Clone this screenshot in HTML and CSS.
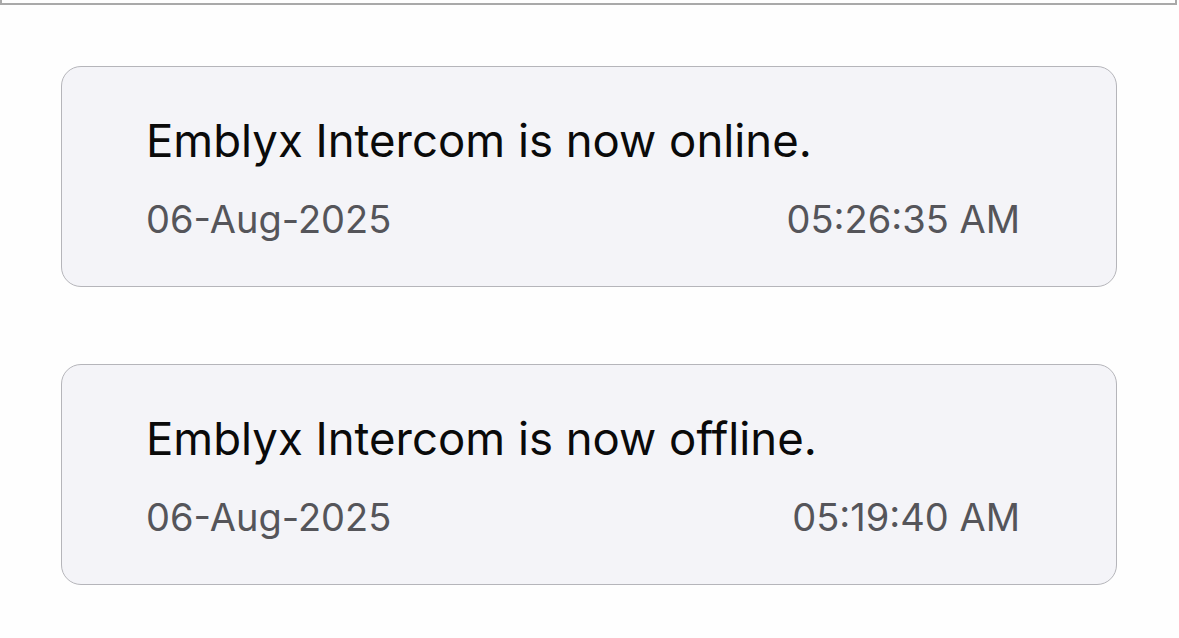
FILE: index.html
```html
<!DOCTYPE html>
<html lang="en">
<head>
<meta charset="utf-8">
<title>Notifications</title>
<link rel="stylesheet" href="styles.css">
</head>
<body>
<div class="topbar"></div>
<main class="list">
  <div class="card">
    <p class="title">Emblyx Intercom is now online.</p>
    <div class="meta">
      <span class="date">06-Aug-2025</span>
      <span class="time">05:26:35 AM</span>
    </div>
  </div>
  <div class="card">
    <p class="title">Emblyx Intercom is now offline.</p>
    <div class="meta">
      <span class="date">06-Aug-2025</span>
      <span class="time">05:19:40 AM</span>
    </div>
  </div>
</main>
</body>
</html>
```
FILE: styles.css
```css
html, body {
  margin: 0;
  padding: 0;
  background: #fefefe;
}
body {
  font-family: Inter, "Noto Sans", "Liberation Sans", sans-serif;
  width: 1179px;
  height: 638px;
  overflow: hidden;
}
.topbar {
  width: 1177px;
  height: 5px;
  box-sizing: border-box;
  border: 2px solid #a9a9a9;
  border-top: 0;
}
.list {
  display: flex;
  flex-direction: column;
  gap: 77px;
  padding: 61px 0 0 61px;
}
.card {
  width: 1056px;
  height: 221px;
  box-sizing: border-box;
  border: 1px solid #b5b5ba;
  border-radius: 20px;
  background: #f4f4f8;
  padding: 46px 96px 0 84px;
}
.title {
  margin: 0;
  font-size: 45.5px;
  line-height: 56px;
  color: #0a0a0a;
}
.meta {
  display: flex;
  justify-content: space-between;
  margin-top: 28px;
  font-size: 38px;
  line-height: 44px;
  color: #55555a;
}
```
